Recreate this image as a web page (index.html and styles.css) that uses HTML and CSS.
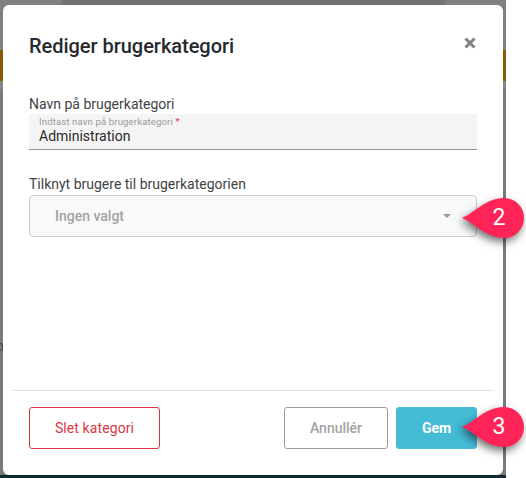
FILE: index.html
```html
<!DOCTYPE html>
<html lang="da">
<head>
<meta charset="utf-8">
<title>Rediger brugerkategori</title>
<link rel="stylesheet" href="styles.css">
</head>
<body>
<div class="page">
  <div class="backdrop">
    <div class="top-strip">
      <span class="strip-light strip-left"></span>
      <span class="strip-dark"></span>
      <span class="strip-light strip-right"></span>
    </div>
    <div class="warn-band"></div>
    <div class="sub-band"></div>
    <div class="filler"></div>
    <div class="foot-band"></div>
    <span class="peek"></span>
  </div>

  <section class="modal">
    <header class="modal-head">
      <h1 class="modal-title">Rediger brugerkategori</h1>
      <svg class="close" width="12" height="12" viewBox="0 0 12 12" aria-hidden="true"><path d="M1.5 1.5l9 9M10.5 1.5l-9 9"/></svg>
    </header>
    <div class="modal-body">
      <div class="group-name">
        <div class="label">Navn på brugerkategori</div>
        <div class="input">
          <div class="float">Indtast navn på brugerkategori <span class="req">*</span></div>
          <div class="value">Administration</div>
        </div>
      </div>
      <div class="group-users">
        <div class="label">Tilknyt brugere til brugerkategorien</div>
        <div class="select">
          <span>Ingen valgt</span>
          <span class="caret"></span>
        </div>
      </div>
    </div>
    <footer class="modal-foot">
      <button class="btn btn-danger">Slet kategori</button>
      <div class="foot-actions">
        <button class="btn btn-cancel">Annullér</button>
        <button class="btn btn-save">Gem</button>
      </div>
    </footer>
  </section>

  <div class="pin pin-2">
    <svg class="pin-shape" width="62" height="40" viewBox="0 0 62 40" aria-hidden="true"><path d="M0 20C11 16 24 0 42 0a20 20 0 0 1 0 40C24 40 11 24 0 20Z"/></svg>
    <span class="pin-num">2</span>
  </div>
  <div class="pin pin-3">
    <svg class="pin-shape" width="62" height="40" viewBox="0 0 62 40" aria-hidden="true"><path d="M0 20C11 16 24 0 42 0a20 20 0 0 1 0 40C24 40 11 24 0 20Z"/></svg>
    <span class="pin-num">3</span>
  </div>
</div>
</body>
</html>
```

FILE: styles.css
```css
* { box-sizing: border-box; }
html, body { margin: 0; padding: 0; background: #fff; }
body { font-family: Roboto, "Liberation Sans", sans-serif; overflow: hidden; }

.page { position: relative; width: 526px; height: 478px; }

.backdrop {
  position: relative;
  width: 506px;
  height: 478px;
  display: flex;
  flex-direction: column;
  background: #757575;
  overflow: hidden;
}
.top-strip { display: flex; height: 50px; flex: none; }
.strip-light { background: #808080; }
.strip-left { width: 62px; }
.strip-dark { flex: 1; background: #727272; }
.strip-right { width: 61px; }
.warn-band { height: 31px; flex: none; background: #8a5c00; }
.sub-band { height: 8px; flex: none; background: #868686; }
.filler { flex: 1; background: #7a7a7a; }
.foot-band { height: 3px; flex: none; background: #0f2a33; }
.peek {
  position: absolute;
  left: 0;
  top: 343px;
  width: 3px;
  height: 8px;
  border: 1px solid #3a4046;
  border-left: 0;
  border-radius: 0 3px 3px 0;
}

.modal {
  position: absolute;
  left: 3px;
  top: 5px;
  width: 500px;
  height: 470px;
  display: flex;
  flex-direction: column;
  background: #fff;
  border-radius: 6px;
}
.modal-head {
  display: flex;
  align-items: center;
  justify-content: space-between;
  padding: 16px 27px 0 26px;
  height: 66px;
  flex: none;
}
.modal-title {
  margin: 0;
  font-size: 20px;
  font-weight: 500;
  line-height: 24px;
  letter-spacing: -0.03px;
  color: #262a2e;
}
.close { flex: none; margin-bottom: 6px; }
.close path { fill: none; stroke: #808080; stroke-width: 3; }

.modal-body { flex: 1; padding: 23px 26px 0 26px; }
.label { font-size: 14px; line-height: 20px; color: #3f4347; }
.input {
  height: 36px;
  padding: 2px 10px 0;
  background: #f4f4f4;
  border-bottom: 1px solid #949494;
}
.float { font-size: 9.6px; line-height: 11px; color: #9a9a9a; letter-spacing: 0.12px; }
.req { color: #e8394c; }
.value { font-size: 14px; line-height: 18px; color: #2a2a2a; }

.group-users { margin-top: 24px; }
.group-users .label { line-height: 21px; }
.select {
  display: flex;
  align-items: center;
  justify-content: space-between;
  height: 42px;
  padding: 0 25px 0 25px;
  background: #f8f9fa;
  border: 1px solid #cdcdcd;
  border-radius: 4px;
  font-size: 14px;
  font-weight: 500;
  color: #a3a3a3;
}
.caret {
  width: 0;
  height: 0;
  border-left: 4px solid transparent;
  border-right: 4px solid transparent;
  border-top: 4px solid #9a9a9a;
}

.modal-foot {
  flex: none;
  height: 85px;
  margin: 0 10px;
  padding: 16px 16px 0;
  border-top: 1px solid #e1e1e1;
  display: flex;
  justify-content: space-between;
  align-items: flex-start;
}
.foot-actions { display: flex; gap: 8px; }
.btn {
  height: 42px;
  padding: 0;
  background: #fff;
  border-radius: 3px;
  font-family: inherit;
  font-size: 14px;
}
.btn-danger { width: 131px; border: 1px solid #dc3545; color: #dc3545; letter-spacing: 0.1px; }
.btn-cancel { width: 104px; border: 1px solid #9b9b9b; color: #a3a3a3; font-weight: 500; }
.btn-save { width: 81px; border: 1px solid #45bbd6; background: #45bbd6; color: #fff; font-weight: 700; }

.pin {
  position: absolute;
  width: 62px;
  height: 40px;
  display: flex;
  align-items: center;
  justify-content: flex-end;
}
.pin-2 { left: 462px; top: 198px; }
.pin-3 { left: 462px; top: 407px; }
.pin-shape {
  position: absolute;
  left: 0;
  top: 0;
  overflow: visible;
  filter: drop-shadow(-2px 4px 4px rgba(0, 0, 0, 0.55));
}
.pin-shape path { fill: #ff2458; }
.pin-num {
  position: relative;
  width: 50px;
  text-align: center;
  font-size: 23px;
  line-height: 28px;
  color: #fff;
}
```
